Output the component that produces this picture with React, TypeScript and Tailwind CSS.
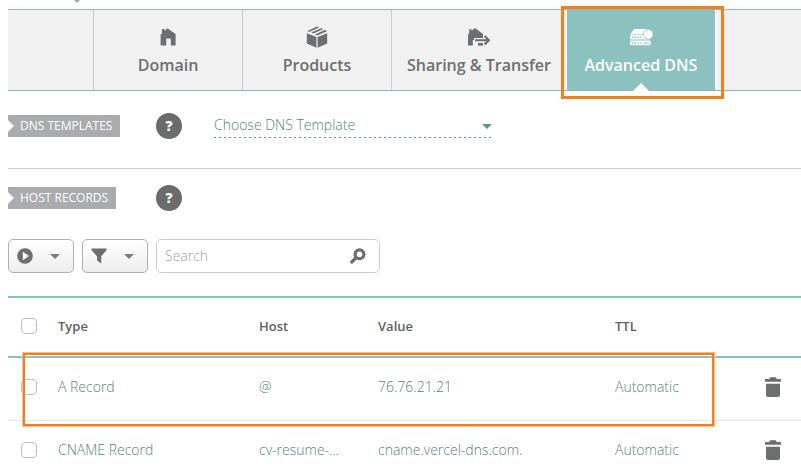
import type { ReactNode } from "react";

const ICON = "#6d6e70";

function HouseIcon() {
  return (
    <svg width="16" height="18" viewBox="0 0 16 18" fill={ICON} aria-hidden="true">
      <path d="M2 1h2.6v2L7.4.2 15.6 6v11.6h-4.8v-7H6.2v7H.6V6.4L2 5.2z" />
    </svg>
  );
}

function BoxIcon() {
  return (
    <svg width="22" height="22" viewBox="0 0 22 22" fill={ICON} aria-hidden="true">
      <path d="M.8 7.2 10.4 11v10.8L.8 17.4zM21.2 7.2 11.6 11v10.8l9.6-4.4z" />
      <path d="m11 .6 2.2.9-9.6 4.2L1 5.2zM15 2.2l2.2.9L7.6 7.5 5.2 6.4zM19 3.8l2 1.4L11 9.6 9.2 8.6z" />
    </svg>
  );
}

function ShareIcon() {
  return (
    <svg width="24" height="18" viewBox="0 0 24 18" fill={ICON} aria-hidden="true">
      <path d="M2.200 1.200h2.400v1.600L8 0l8 6v4H7v2H5.800v5.600H1V6.400l1.200-1.200z" />
      <path d="M11 15h5v2.600h-5z" />
      <path d="M8 11.200h11.400l-2.600-2.400L18.400 7.200l5 5-5 5-1.600-1.600 2.600-2.400H8z" />
    </svg>
  );
}

function ServerIcon() {
  return (
    <svg width="24" height="18" viewBox="0 0 24 18" aria-hidden="true">
      <path d="M5 1h13l3 5.200H1.400z" fill="#fff" />
      <rect x="1" y="6.800" width="20.600" height="4.800" rx="1" fill="#fff" />
      <rect x="1" y="12.600" width="20.600" height="4.600" rx="1" fill="#fff" />
      <path d="M3 9.200h9M3 15h9" stroke="#8bc1be" strokeWidth="1.500" strokeDasharray="1.500 1.200" />
      <path d="M14.500 15H20" stroke="#8bc1be" />
      <circle cx="19.300" cy="6.300" r="4.800" fill="#fff" stroke="#8bc1be" strokeWidth=".8" />
    </svg>
  );
}

function Caret({ color = "#7c7c7c" }: { color?: string }) {
  return (
    <svg width="10" height="5" viewBox="0 0 10 5" fill={color} aria-hidden="true">
      <path d="M0 0h10L5 5z" />
    </svg>
  );
}

function TrashIcon() {
  return (
    <svg width="16" height="20" viewBox="0 0 16 20" fill={ICON} aria-hidden="true">
      <path d="M0 2h4.200L5.200.3h5.600l1 1.700H16v2.700H0zM1 6.800h14v11.200a2 2 0 0 1-2 2H3a2 2 0 0 1-2-2z" />
    </svg>
  );
}

function Tab({ icon, label }: { icon: ReactNode; label: string }) {
  return (
    <a
      href="#"
      className="flex min-w-[149px] flex-col items-center gap-1 border-l border-[#c5cdcd] px-[15px] pt-[15px] text-base font-semibold text-[#6d6e70]"
    >
      <span className="flex h-6 items-center">{icon}</span>
      <span className="whitespace-nowrap leading-6">{label}</span>
    </a>
  );
}

function SectionLabel({ children }: { children: ReactNode }) {
  return (
    <div className="w-[148px]">
      <h2 className="relative inline-block h-[22px] bg-[#a9abae] px-2 pl-3 text-xs leading-[22px] font-normal text-white">
        <svg className="absolute top-[5px] left-0" width="6" height="12" viewBox="0 0 6 12" fill="#fff" aria-hidden="true">
          <path d="M0 0l6 6-6 6z" />
        </svg>
        {children}
      </h2>
    </div>
  );
}

function Help({ label }: { label: string }) {
  return (
    <button
      type="button"
      aria-label={label}
      className="flex size-[26px] items-center justify-center rounded-full bg-[#6a6b6d] text-sm font-extrabold text-white"
    >
      ?
    </button>
  );
}

function MenuButton({ label, icon }: { label: string; icon: ReactNode }) {
  return (
    <button
      type="button"
      aria-label={label}
      className="flex h-[34px] w-[66px] items-center justify-between rounded-[5px] border border-[#b0b0b0] bg-linear-to-b from-white to-[#ededed] pr-[13px] pl-2"
    >
      {icon}
      <Caret />
    </button>
  );
}

function Check({ label }: { label: string }) {
  return (
    <input
      type="checkbox"
      aria-label={label}
      className="block size-4 appearance-none rounded-[4px] border border-[#bfbfbf] bg-white checked:bg-[#8bc1be]"
    />
  );
}

const records = [
  { type: "A Record", host: "@", value: "76.76.21.21", ttl: "Automatic", marked: true },
  { type: "CNAME Record", host: "cv-resume-...", value: "cname.vercel-dns.com.", ttl: "Automatic", marked: false },
];

export default function App() {
  return (
    <main className="h-screen overflow-hidden bg-white pl-2 font-['Open_Sans','Noto_Sans',sans-serif] text-sm text-[#577f7e]">
      <div className="h-[9px] pl-16">
        <svg width="10" height="3" viewBox="0 0 10 3" fill="#a5a5a5" className="block" aria-hidden="true">
          <path d="M2 0h6L5 3z" />
        </svg>
      </div>

      <nav className="flex h-[82px] border-y border-[#8eb8b6] bg-[#f1f1f1] pl-[85px]">
        <Tab icon={<HouseIcon />} label="Domain" />
        <Tab icon={<BoxIcon />} label="Products" />
        <Tab icon={<ShareIcon />} label="Sharing & Transfer" />
        <a
          href="#"
          aria-current="page"
          className="relative flex w-[150px] flex-col items-center gap-1 border-x border-white bg-[#8bc1be] pt-[15px] text-base font-semibold text-white"
        >
          <span className="flex h-6 items-center">
            <ServerIcon />
          </span>
          <span className="whitespace-nowrap leading-6">Advanced DNS</span>
          <svg className="absolute -bottom-px left-1/2 -translate-x-1/2" width="16" height="8" viewBox="0 0 16 8" fill="#fff" aria-hidden="true">
            <path d="M0 8l8-8 8 8z" />
          </svg>
          <span className="pointer-events-none absolute -top-1 -right-[9px] -bottom-[9px] -left-[6px] border-3 border-[#ef7f1f]" />
        </a>
      </nav>

      <section className="flex h-[78px] items-start border-b border-[#cfcfcf] pt-[22px]">
        <div className="flex h-[26px] items-center">
          <SectionLabel>DNS TEMPLATES</SectionLabel>
          <Help label="About DNS templates" />
        </div>
        <div className="relative ml-8 w-[280px]">
          <select
            aria-label="DNS template"
            className="block h-[24px] w-full appearance-none bg-transparent text-sm font-light"
          >
            <option>Choose DNS Template</option>
          </select>
          <div className="h-px bg-[repeating-linear-gradient(to_right,#6d9291_0_2px,transparent_2px_5px)]" />
          <span className="pointer-events-none absolute top-[11px] right-[2px]">
            <Caret color="#5f9290" />
          </span>
        </div>
      </section>

      <section className="mt-4 flex h-[26px] items-center">
        <SectionLabel>HOST RECORDS</SectionLabel>
        <Help label="About host records" />
      </section>

      <div className="mt-7 flex gap-2">
        <MenuButton
          label="Actions"
          icon={
            <svg width="16" height="16" viewBox="0 0 16 16" fill={ICON} aria-hidden="true">
              <circle cx="8" cy="8" r="7.800" />
              <path d="M5.800 3.800 12 8l-6.200 4.200z" fill="#fff" />
            </svg>
          }
        />
        <MenuButton
          label="Filter"
          icon={
            <svg width="16" height="16" viewBox="0 0 16 16" fill={ICON} aria-hidden="true">
              <path d="M.500.500h15v1.700L10.200 8.200v7.300L6 12.500V8.200L.500 2.200z" />
            </svg>
          }
        />
        <div className="flex h-[34px] w-[224px] items-center rounded-[5px] border border-[#cecece] pr-[13px] pl-2">
          <input
            type="text"
            aria-label="Search"
            placeholder="Search"
            className="min-w-0 flex-1 bg-transparent text-sm font-light outline-none placeholder:text-[#a0a0a0]"
          />
          <button type="button" aria-label="Run search">
            <svg width="16" height="16" viewBox="0 0 16 16" fill="none" stroke={ICON} aria-hidden="true">
              <circle cx="9.500" cy="6.300" r="4.400" strokeWidth="3.200" />
              <path d="m5.800 10-4 4" strokeWidth="3.200" strokeLinecap="round" />
            </svg>
          </button>
        </div>
      </div>

      <table className="mt-[23px] w-full table-fixed border-separate border-spacing-0 text-left font-light">
        <colgroup>
          <col className="w-[50px]" />
          <col className="w-[201px]" />
          <col className="w-[119px]" />
          <col />
          <col className="w-[150px]" />
          <col className="w-[36px]" />
        </colgroup>
        <thead>
          <tr className="h-[62px] text-[13px] text-[#5f6062] *:border-y-2 *:border-[#8bc1be] *:pb-0.5 *:font-semibold">
            <th className="pl-[13px]">
              <Check label="Select all records" />
            </th>
            <th>Type</th>
            <th>Host</th>
            <th>Value</th>
            <th>TTL</th>
            <td />
          </tr>
        </thead>
        <tbody className="text-sm">
          {records.map((r) => (
            <tr key={r.type} className="relative h-[63px] *:border-b *:border-[#e4e4e4] *:pb-1">
              <td className="pl-[13px]">
                <Check label={"Select " + r.type} />
              </td>
              <td>{r.type}</td>
              <td>{r.host}</td>
              <td>{r.value}</td>
              <td>{r.ttl}</td>
              <td>
                <button type="button" aria-label={"Delete " + r.type} className="block">
                  <TrashIcon />
                </button>
                {r.marked && (
                  <span className="pointer-events-none absolute -top-[5px] right-[87px] -bottom-[5px] left-[15px] border-2 border-[#ef7f1f] outline outline-[#fbbf7f]" />
                )}
              </td>
            </tr>
          ))}
        </tbody>
      </table>
    </main>
  );
}
